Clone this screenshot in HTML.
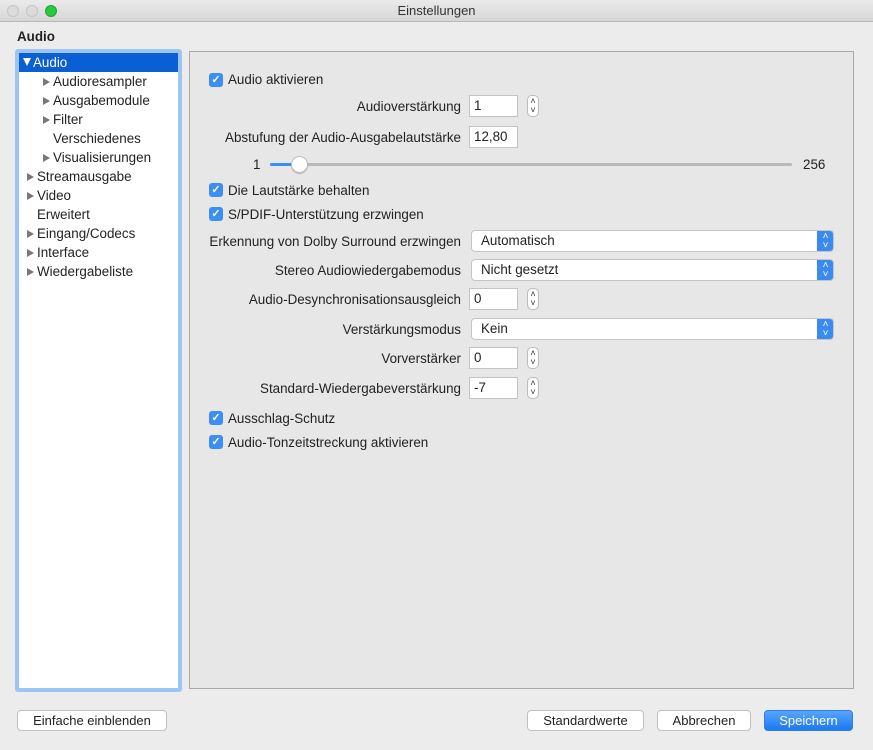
<!DOCTYPE html>
<html><head><meta charset="utf-8"><style>
*{box-sizing:border-box;margin:0;padding:0}
body{width:873px;height:750px;background:#ececec;font-family:"Liberation Sans",sans-serif;font-size:13.4px;color:#222;position:relative;overflow:hidden}
.abs{position:absolute}
.title{left:0;top:0;width:873px;height:22px;background:linear-gradient(#ebebeb,#d6d6d6);border-bottom:1px solid #b8b8b8;text-align:center;line-height:21px;font-size:13px;color:#333}
.dot{top:5px;width:12px;height:12px;border-radius:50%;background:#dcdcdc;border:1px solid #c4c4c4}
.tree{left:15px;top:49px;width:167px;height:643px;border:4px solid #9cc4f4;border-radius:3px;background:#fff}
.ti{position:absolute;height:19px;line-height:19px;white-space:nowrap}
.tri{display:inline-block;width:0;height:0;border-top:4px solid transparent;border-bottom:4px solid transparent;border-left:7px solid #777;margin-right:3px;vertical-align:0px}
.panel{left:189px;top:51px;width:665px;height:638px;border:1px solid #a9a9a9;background:#e7e7e7}
.cb{width:14px;height:14px;border-radius:3px;background:#3b8ff4;color:#fff;font-size:11px;line-height:14px;text-align:center;font-weight:bold}
.lbl{text-align:right;width:300px;white-space:nowrap}
.inp{left:469px;width:49px;height:22px;background:#fff;border:1px solid #c4c4c4;padding-left:4px;line-height:20px}
.step{left:527px;width:12px;height:22px;background:#fff;border:1px solid #bbb;border-radius:5px;font-size:9px;line-height:9px;text-align:center;color:#333;padding-top:1px}
.sel{left:471px;width:363px;height:22px;background:#fff;border:1px solid #c4c4c4;border-radius:4px;padding-left:9px;line-height:20px;overflow:hidden}
.sel b{position:absolute;right:-1px;top:-1px;width:17px;height:22px;background:#3a8af4;border-radius:0 4px 4px 0;color:#fff;font-size:10px;line-height:9px;text-align:center;padding-top:2px;font-weight:normal}
.btn{top:710px;height:21px;background:#fff;border:1px solid #c0c0c0;border-radius:4px;text-align:center;line-height:19px;font-size:13px}
</style></head><body>
<div class="abs title">Einstellungen</div>
<div class="abs dot" style="left:7px"></div>
<div class="abs dot" style="left:26px"></div>
<div class="abs dot" style="left:45px;background:#2ac840;border-color:#1ea733"></div>
<div class="abs" style="left:17px;top:29px;font-weight:bold">Audio</div>
<div class="abs tree">
<div class="ti" style="left:0;top:0;width:159px;background:#0b5fd5;color:#fff;padding-left:4px"><span class="tri" style="border-left:4px solid transparent;border-right:4px solid transparent;border-top:8px solid #fff;border-bottom:0;margin-right:2px;vertical-align:1px"></span>Audio</div>
<div class="ti" style="left:24px;top:19px"><span class="tri"></span>Audioresampler</div>
<div class="ti" style="left:24px;top:38px"><span class="tri"></span>Ausgabemodule</div>
<div class="ti" style="left:24px;top:57px"><span class="tri"></span>Filter</div>
<div class="ti" style="left:34px;top:76px">Verschiedenes</div>
<div class="ti" style="left:24px;top:95px"><span class="tri"></span>Visualisierungen</div>
<div class="ti" style="left:8px;top:114px"><span class="tri"></span>Streamausgabe</div>
<div class="ti" style="left:8px;top:133px"><span class="tri"></span>Video</div>
<div class="ti" style="left:18px;top:152px">Erweitert</div>
<div class="ti" style="left:8px;top:171px"><span class="tri"></span>Eingang/Codecs</div>
<div class="ti" style="left:8px;top:190px"><span class="tri"></span>Interface</div>
<div class="ti" style="left:8px;top:209px"><span class="tri"></span>Wiedergabeliste</div>
</div>
<div class="abs panel"></div>

<div class="abs cb" style="left:209px;top:73px">✓</div><div class="abs" style="left:228px;top:72px">Audio aktivieren</div>
<div class="abs lbl" style="left:161px;top:99px">Audioverstärkung</div>
<div class="abs inp" style="top:95px">1</div><div class="abs step" style="top:95px">˄<br>˅</div>
<div class="abs lbl" style="left:161px;top:130px">Abstufung der Audio-Ausgabelautstärke</div>
<div class="abs inp" style="top:126px">12,80</div>
<div class="abs" style="left:253px;top:157px">1</div>
<div class="abs" style="left:270px;top:163px;width:522px;height:3px;background:#b9b9b9;border-radius:2px"></div>
<div class="abs" style="left:270px;top:163px;width:30px;height:3px;background:#3b8ff4;border-radius:2px"></div>
<div class="abs" style="left:291px;top:156px;width:17px;height:17px;border-radius:50%;background:#fff;border:1px solid #bdbdbd;box-shadow:0 1px 1px rgba(0,0,0,.2)"></div>
<div class="abs" style="left:803px;top:157px">256</div>
<div class="abs cb" style="left:209px;top:183px">✓</div><div class="abs" style="left:228px;top:183px">Die Lautstärke behalten</div>
<div class="abs cb" style="left:209px;top:207px">✓</div><div class="abs" style="left:228px;top:207px">S/PDIF-Unterstützung erzwingen</div>
<div class="abs lbl" style="left:161px;top:234px">Erkennung von Dolby Surround erzwingen</div>
<div class="abs sel" style="top:230px">Automatisch<b>˄<br>˅</b></div>
<div class="abs lbl" style="left:161px;top:263px">Stereo Audiowiedergabemodus</div>
<div class="abs sel" style="top:259px">Nicht gesetzt<b>˄<br>˅</b></div>
<div class="abs lbl" style="left:161px;top:292px">Audio-Desynchronisationsausgleich</div>
<div class="abs inp" style="top:288px">0</div><div class="abs step" style="top:288px">˄<br>˅</div>
<div class="abs lbl" style="left:161px;top:322px">Verstärkungsmodus</div>
<div class="abs sel" style="top:318px">Kein<b>˄<br>˅</b></div>
<div class="abs lbl" style="left:161px;top:351px">Vorverstärker</div>
<div class="abs inp" style="top:347px">0</div><div class="abs step" style="top:347px">˄<br>˅</div>
<div class="abs lbl" style="left:161px;top:381px">Standard-Wiedergabeverstärkung</div>
<div class="abs inp" style="top:377px">-7</div><div class="abs step" style="top:377px">˄<br>˅</div>
<div class="abs cb" style="left:209px;top:411px">✓</div><div class="abs" style="left:228px;top:411px">Ausschlag-Schutz</div>
<div class="abs cb" style="left:209px;top:435px">✓</div><div class="abs" style="left:228px;top:435px">Audio-Tonzeitstreckung aktivieren</div>

<div class="abs btn" style="left:17px;width:150px">Einfache einblenden</div>
<div class="abs btn" style="left:527px;width:117px">Standardwerte</div>
<div class="abs btn" style="left:657px;width:94px">Abbrechen</div>
<div class="abs btn" style="left:764px;width:89px;background:linear-gradient(#5aa5fb,#1a78f3);border-color:#2a7fe8;color:#fff">Speichern</div>
</body></html>
